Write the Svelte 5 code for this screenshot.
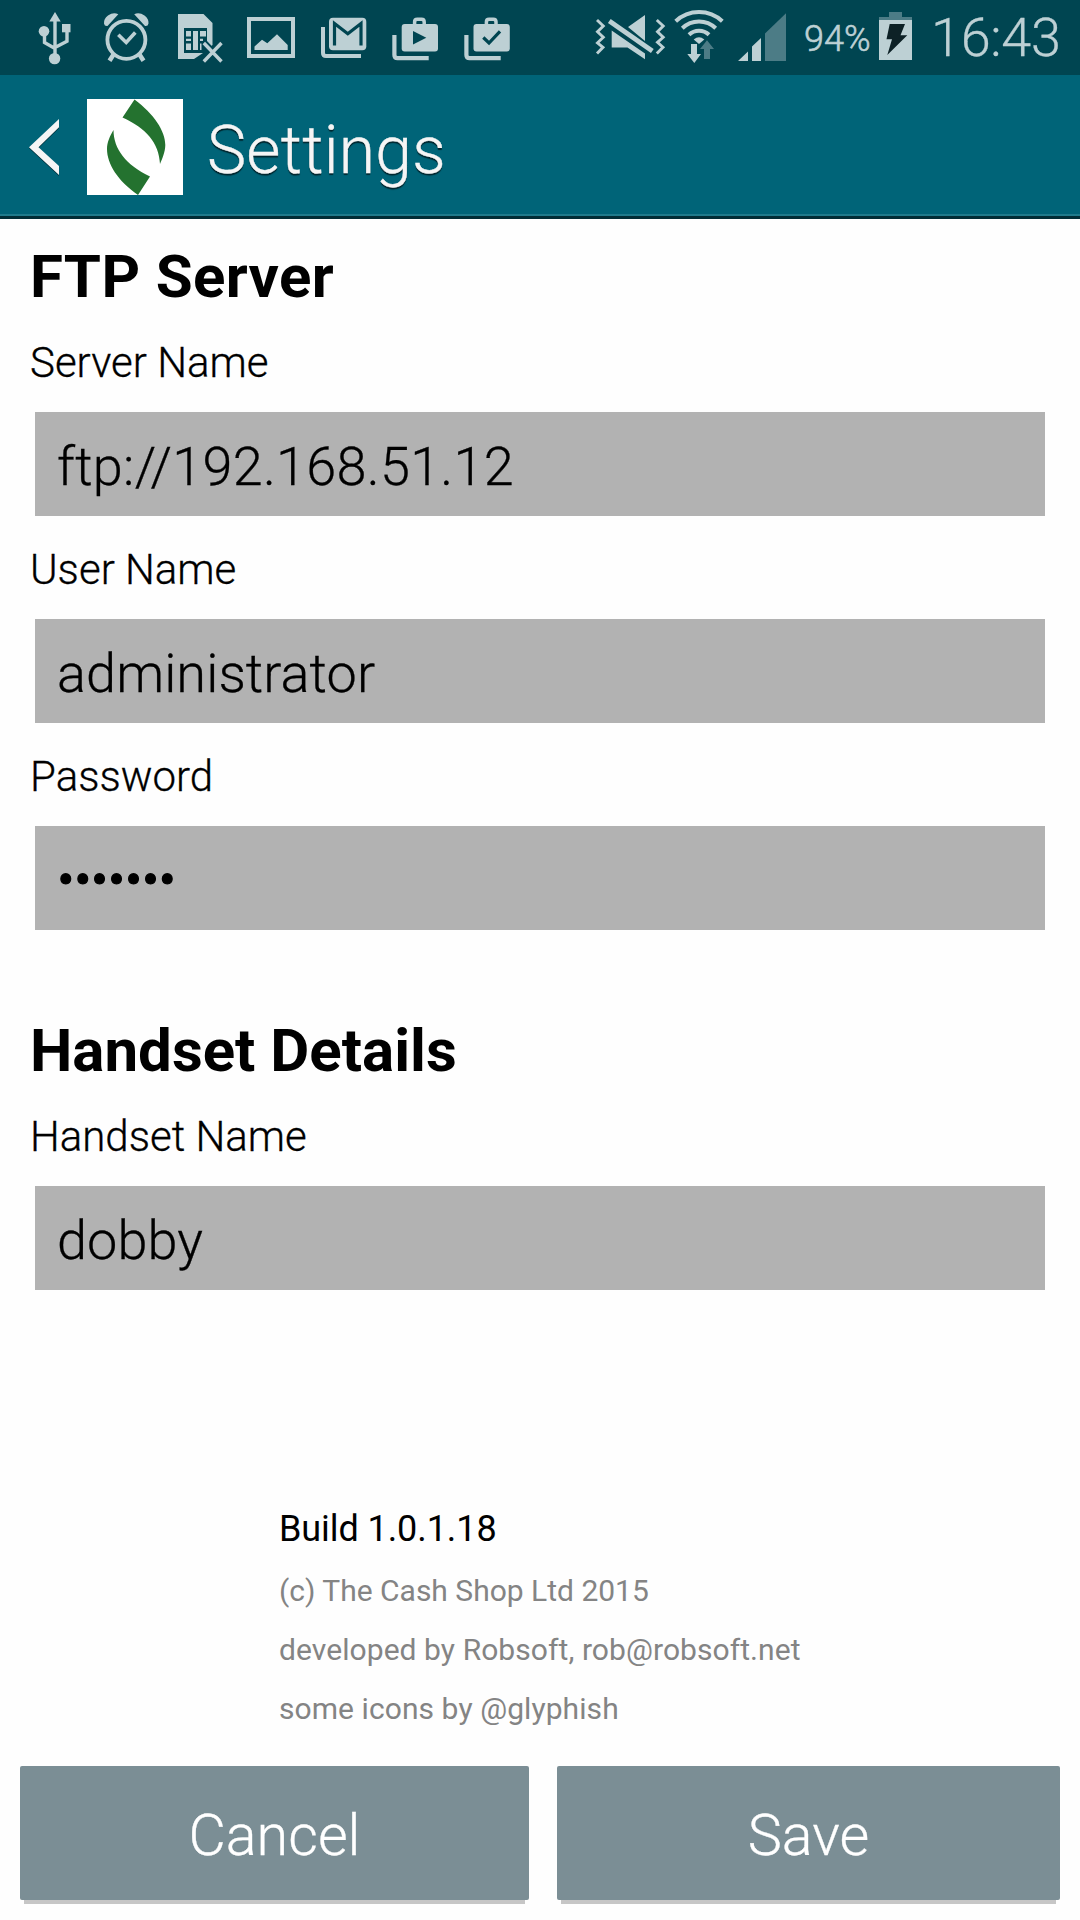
<script>
  const serverFields = [
    { label: 'Server Name', value: 'ftp://192.168.51.12', kind: 'address' },
    { label: 'User Name', value: 'administrator', kind: 'user' },
    { label: 'Password', value: '•••••••', kind: 'secret' }
  ];
  const handsetFields = [{ label: 'Handset Name', value: 'dobby', kind: 'handset' }];
  const credits = [
    '(c) The Cash Shop Ltd 2015',
    'developed by Robsoft, rob@robsoft.net',
    'some icons by @glyphish'
  ];
</script>

{#snippet field(item)}
  <div class="field">
    <div class="label">{item.label}</div>
    <div class="input {item.kind}"><span>{item.value}</span></div>
  </div>
{/snippet}

<div class="screen">
  <div class="status">
    <!-- USB -->
    <svg width="90" height="75" viewBox="0 0 90 75">
      <path class="lit" d="M55 12 60.7 21.5H49.3z" />
      <circle class="lit" cx="44" cy="31.2" r="5.3" />
      <rect class="lit" x="62" y="24" width="8.5" height="8.3" />
      <circle class="lit" cx="54.6" cy="58.6" r="5.7" />
      <path class="line" stroke-width="3.4" d="M55 20V55M44.5 35V42.5L55 48.5M67 32V41.3L55 47.5" />
    </svg>
    <!-- Alarm -->
    <svg width="75" height="75" viewBox="90 0 75 75">
      <circle class="line" cx="126.4" cy="39.8" r="19" stroke-width="3.8" />
      <path class="line" stroke-width="3.6" d="M118.3 34.8 126.2 42.5 135.3 32.5" />
      <path class="lit" d="M104 23.5Q103.500 19 108 15.5Q113.500 11.800 118.300 14.300L107.500 26Q104.500 26.500 104 23.500zM148.500 23.500Q149 19 144.500 15.500Q139 11.800 134.200 14.300L145 26Q148 26.500 148.500 23.500z" />
      <path class="line" stroke-width="4.500" d="M113.500 54.500 109.500 60.800M139.500 54.500 143.500 60.800" />
    </svg>
    <!-- SIM card error -->
    <svg width="70" height="75" viewBox="165 0 70 75">
      <path class="lit" d="M178 14H203.500L212.500 23V45L203 53 194 59H178z" />
      <path class="dark" d="M184 28H207V53H184z" />
      <path class="halo" stroke-width="7" d="M204 43 222 62M222 42 203 62" />
      <path class="lit" d="M186 31H191V36.500H186zM186 38.800H191V41H186zM186 43.500H191V50H186zM193 31H198V50H193zM200 31H206V36.500H200zM200 38.800H203V41H200zM200 43.500H201.500V50H200z" />
      <path class="line" stroke-width="3.400" d="M203.800 43 221.500 61.500M221.500 43 203.800 61.500" />
    </svg>
    <!-- Picture -->
    <svg width="75" height="75" viewBox="235 0 75 75">
      <rect class="line" x="249" y="19" width="44" height="37" stroke-width="4" />
      <path class="lit" d="M254.500 50V46.500L262 39.800 267.300 43.300 277 34.300 287.700 45V50z" />
    </svg>
    <!-- Mail -->
    <svg width="70" height="75" viewBox="310 0 70 75">
      <rect class="lit" x="329" y="17.700" width="37.300" height="32.500" rx="4" />
      <path class="halo" stroke-width="3.200" d="M334.500 45.500V23.500L347.800 33.800 361 23.500V45.500" />
      <path class="line" stroke-width="4" d="M323 27V53Q323 56 326 56H361" />
    </svg>
    <!-- Play store -->
    <svg width="72" height="75" viewBox="380 0 72 75">
      <rect class="lit" x="401.700" y="24" width="36.300" height="27.500" rx="3" />
      <path class="line" stroke-width="3.500" d="M414.600 25V22Q414.600 19.300 417.300 19.300H421.500Q424.200 19.300 424.200 22V25" />
      <path class="dark" d="M413 31 426.300 37.800 413 44.600z" />
      <path class="line" stroke-width="4.200" d="M394.400 35V55Q394.400 58.200 397.600 58.200H428.700" />
    </svg>
    <!-- Play store, updated -->
    <svg width="108" height="75" viewBox="452 0 108 75">
      <rect class="lit" x="473.500" y="24" width="36.300" height="27.500" rx="3" />
      <path class="line" stroke-width="3.500" d="M486.400 25V22Q486.400 19.300 489.100 19.300H493.300Q496 19.300 496 22V25" />
      <path class="halo" stroke-width="3.200" d="M483.300 37.500 489 43 500 31.300" />
      <path class="line" stroke-width="4.200" d="M466.400 35V55Q466.400 58.200 469.600 58.200H500.700" />
    </svg>
    <!-- Muted, vibrate -->
    <svg width="108" height="75" viewBox="560 0 108 75">
      <path class="line" stroke-width="2.900" d="M597 20 603.300 26 597.500 31.800 603.300 37.300 597.500 42.800 603 47.300 597 53.500M656.800 20 663.200 26 657.500 31.800 663.200 37.300 657.500 42.300 663 47.300 656.800 53.500" />
      <path class="lit" d="M645 15V41L628 27zM611.700 30.500 645 53.500V59.200L627.500 47.500H611.700z" />
      <path class="line" stroke-width="4.800" d="M609.300 21 652.300 51" />
    </svg>
    <!-- Wi-Fi -->
    <svg width="62" height="75" viewBox="668 0 62 75">
      <path class="line" stroke-width="4" d="M675.700 21.300A34 34 0 0 1 722.300 21.300M682.300 28.300A24 24 0 0 1 715.700 28.300M689 34.800A14.500 14.500 0 0 1 709 34.800" />
      <path class="lit" d="M693.700 39.500Q699 35 704.300 39.500L699 44z" />
      <path class="lit" d="M691 44H697V54H701L694.300 63 687.300 54H691z" />
      <path class="dim" d="M704 59V49H700L707 40.300 714 49H710V59z" />
    </svg>
    <!-- Signal -->
    <svg width="74" height="75" viewBox="730 0 74 75">
      <path class="lit" d="M738 61 748 51.500V61zM752 61V46.500L761 38V61z" />
      <path class="dim" d="M765 61V33.500L786 13.300V61z" />
    </svg>
    <span class="percent">94%</span>
    <!-- Battery -->
    <svg width="45" height="75" viewBox="875 0 45 75">
      <path class="dim" d="M889 12H902V17H912V20H879V17H889z" />
      <path class="lit" d="M879 20H912V60H879z" />
      <path class="bolt" d="M889.700 24H905L900.500 35.300H907.300L887.300 55 892 39.300H886.500z" />
    </svg>
    <span class="clock">16:43</span>
  </div>

  <header class="bar">
    <svg class="back" width="31" height="57" viewBox="29 119 31 57">
      <path class="shade" d="M59 120V128.300L38.500 148.300 59 167V176L29 148.300z" />
      <path class="white" d="M59 119V127.300L38.500 147.300 59 166V175L29 147.300z" />
    </svg>
    <svg class="logo" width="96" height="96" viewBox="87 99 96 96">
      <path class="leaf" d="M134.500 99.500C154 114 165.300 131 165.300 145C165.300 152 162 159 160 164C159 143 146 128 122.500 117.500z" />
      <path class="leaf" d="M113.500 130C113.500 149 126 165 150 176.500L138 195C118 181 107 164 107 149C107 142 110 136 113.500 130z" />
    </svg>
    <h1>Settings</h1>
  </header>

  <main>
    <h2 class="ftp">FTP Server</h2>
    {#each serverFields as item}
      {@render field(item)}
    {/each}
    <h2 class="handset-title">Handset Details</h2>
    {#each handsetFields as item}
      {@render field(item)}
    {/each}
    <div class="about">
      <div class="build">Build 1.0.1.18</div>
      {#each credits as line}
        <div class="credit">{line}</div>
      {/each}
    </div>
  </main>

  <div class="actions">
    <button>Cancel</button>
    <button>Save</button>
  </div>
</div>

<style>
  :global(body) {
    background: #fefefe;
  }
  .screen {
    width: 1080px;
    height: 1920px;
    overflow: hidden;
    display: flex;
    flex-direction: column;
    background: #fefefe;
    font-family: Roboto, 'Liberation Sans', sans-serif;
    color: #000;
  }
  .screen svg {
    display: block;
    flex: none;
  }
  .status {
    height: 75px;
    flex: none;
    display: flex;
    background: #004551;
    color: #bdd0d4;
    white-space: nowrap;
  }
  .lit { fill: #bdd0d4; }
  .dim { fill: #4c7c86; }
  .dark { fill: #004551; }
  .bolt { fill: #0d2126; }
  .line { fill: none; stroke: #bdd0d4; }
  .halo { fill: none; stroke: #004551; }
  .white { fill: #f5f5f5; }
  .shade { fill: #00303a; }
  .leaf { fill: #24722f; }
  .percent {
    width: 71px;
    font-size: 36px;
    font-weight: 300;
    line-height: 78px;
    -webkit-text-stroke: 0.6px #bdd0d4;
  }
  .clock {
    padding-left: 11px;
    font-size: 54px;
    font-weight: 300;
    line-height: 75px;
    letter-spacing: -0.3px;
    -webkit-text-stroke: 0.3px #bdd0d4;
  }
  .bar {
    box-sizing: border-box;
    height: 144px;
    flex: none;
    display: flex;
    align-items: flex-start;
    padding: 24px 0 0 29px;
    background: #006478;
    border-bottom: 3px solid #002d36;
    box-shadow: inset 0 -2px #1f7b8c;
  }
  .back {
    margin: 20px 27px 0 0;
  }
  .logo {
    background: #fff;
  }
  h1 {
    margin: 3px 0 0 24px;
    font-size: 66px;
    font-weight: 300;
    line-height: 97px;
    color: #f5f5f5;
    letter-spacing: 0.25px;
    -webkit-text-stroke: 0.4px #f5f5f5;
    text-shadow: 0 2px 1px #00262e;
  }
  main {
    height: 1547px;
    box-sizing: border-box;
    flex: none;
    padding: 23px 35px 0;
  }
  h2 {
    margin: 0 0 26px -5px;
    font-size: 60px;
    font-weight: 700;
    line-height: 70px;
  }
  .ftp {
    letter-spacing: 0.35px;
  }
  .field + .field {
    margin-top: 29px;
  }
  .handset-title {
    margin-top: 86px;
  }
  .label {
    margin: 0 0 24px -5px;
    font-size: 42px;
    font-weight: 300;
    line-height: 50px;
    -webkit-text-stroke: 0.3px #000;
  }
  .input {
    box-sizing: border-box;
    height: 104px;
    padding: 5px 22px 0;
    background: #b2b2b2;
    font-size: 54px;
    font-weight: 300;
    line-height: 99px;
    letter-spacing: 0.1px;
    -webkit-text-stroke: 0.3px #000;
  }
  .address {
    letter-spacing: 0.27px;
  }
  .secret {
    padding-top: 4px;
    letter-spacing: -0.55px;
    -webkit-text-stroke: 1.2px #000;
  }
  .about {
    margin: 218px 0 0 244px;
  }
  .build {
    margin-bottom: 11px;
    font-size: 36px;
    line-height: 42px;
    letter-spacing: -0.08px;
  }
  .credit {
    font-size: 30px;
    line-height: 59px;
    letter-spacing: 0.07px;
    color: #848484;
  }
  .build + .credit {
    letter-spacing: 0;
  }
  .actions {
    display: grid;
    grid-template-columns: 509px 503px;
    column-gap: 28px;
    padding-left: 20px;
  }
  button {
    height: 134px;
    padding: 6px 0 0;
    border: 0;
    border-radius: 2px;
    background: #7b8e95;
    box-shadow: 0 8px 0 -4px #c6c6c6;
    color: #fff;
    font: 300 57.5px/128px Roboto, 'Liberation Sans', sans-serif;
    -webkit-text-stroke: 0.3px #fff;
  }
</style>
